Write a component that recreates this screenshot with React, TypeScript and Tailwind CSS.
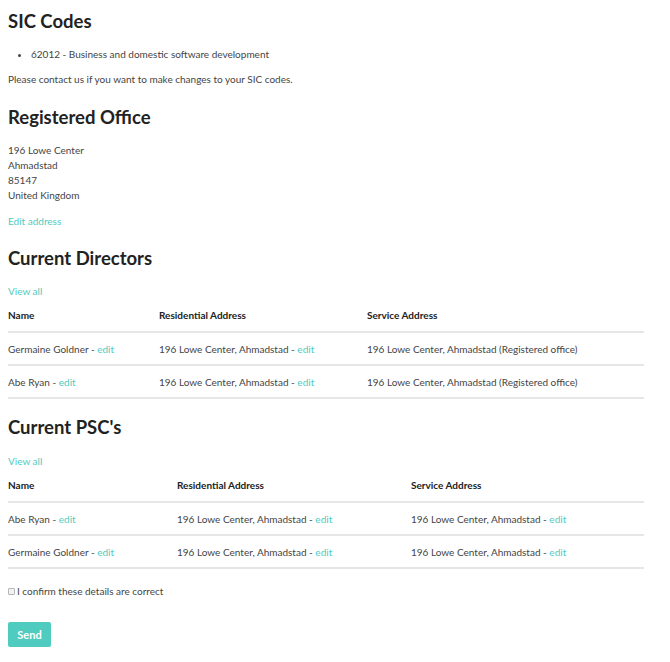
import React from "react";

const teal = "text-[#4fcbbf]";

function Edit() {
  return (
    <>
      {" - "}
      <a className={teal}>edit</a>
    </>
  );
}

type Row = [React.ReactNode, React.ReactNode, React.ReactNode];

function Table({ widths, rows }: { widths: [string, string, string]; rows: Row[] }) {
  return (
    <table className="w-[636px] border-collapse text-left">
      <thead>
        <tr className="border-b-2 border-[#e6e6e6]">
          <th className={`${widths[0]} pt-[9px] pb-[8px] font-bold text-[#222]`}>Name</th>
          <th className={`${widths[1]} pt-[9px] pb-[8px] font-bold text-[#222]`}>Residential Address</th>
          <th className={`${widths[2]} pt-[9px] pb-[8px] font-bold text-[#222]`}>Service Address</th>
        </tr>
      </thead>
      <tbody>
        {rows.map((r, i) => (
          <tr key={i} className="border-b-2 border-[#e6e6e6]">
            <td className="pt-[9px] pb-[7px]">{r[0]}</td>
            <td className="pt-[9px] pb-[7px]">{r[1]}</td>
            <td className="pt-[9px] pb-[7px]">{r[2]}</td>
          </tr>
        ))}
      </tbody>
    </table>
  );
}

export default function App() {
  const addr = "196 Lowe Center, Ahmadstad";
  return (
    <div
      className="bg-white min-h-[662px] px-2 pt-[9px] text-[10px] leading-[15px] text-[#444]"
      style={{ fontFamily: "Lato, 'Open Sans', sans-serif" }}
    >
      <h1 className="text-[18.5px] leading-[24px] font-bold text-[#222]">SIC Codes</h1>
      <ul className="mt-[14px] pl-[23px] list-disc">
        <li>62012 - Business and domestic software development</li>
      </ul>
      <p className="mt-[10px]">Please contact us if you want to make changes to your SIC codes.</p>

      <h2 className="mt-[18px] text-[18.5px] leading-[24px] font-bold text-[#222]">Registered Office</h2>
      <div className="mt-[14px]">
        <div>196 Lowe Center</div>
        <div>Ahmadstad</div>
        <div>85147</div>
        <div>United Kingdom</div>
      </div>
      <a className={`block mt-[11px] ${teal}`}>Edit address</a>

      <h2 className="mt-[17px] text-[18.5px] leading-[24px] font-bold text-[#222]">Current Directors</h2>
      <a className={`block mt-[14px] ${teal}`}>View all</a>
      <Table
        widths={["w-[151px]", "w-[208px]", "w-[277px]"]}
        rows={[
          [<>Germaine Goldner<Edit /></>, <>{addr}<Edit /></>, <>{addr} (Registered office)</>],
          [<>Abe Ryan<Edit /></>, <>{addr}<Edit /></>, <>{addr} (Registered office)</>],
        ]}
      />

      <h2 className="mt-4 text-[18.5px] leading-[24px] font-bold text-[#222]">Current PSC's</h2>
      <a className={`block mt-[15px] ${teal}`}>View all</a>
      <Table
        widths={["w-[169px]", "w-[234px]", "w-[233px]"]}
        rows={[
          [<>Abe Ryan<Edit /></>, <>{addr}<Edit /></>, <>{addr}<Edit /></>],
          [<>Germaine Goldner<Edit /></>, <>{addr}<Edit /></>, <>{addr}<Edit /></>],
        ]}
      />

      <label className="mt-[15px] flex items-center gap-[2px]">
        <span className="inline-block w-[7px] h-[7px] border border-[#b5b5b5] bg-[#f2f2f2] rounded-[1px]" />
        <span>I confirm these details are correct</span>
      </label>

      <button className="mt-[23px] block w-[43px] h-[25px] rounded-[2px] bg-[#4fcbbf] text-white text-[11px] font-bold">
        Send
      </button>
    </div>
  );
}
